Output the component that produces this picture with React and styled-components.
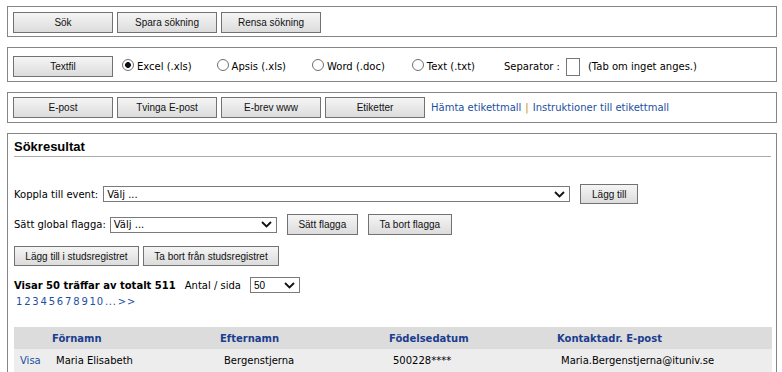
import React from "react";
import styled, { createGlobalStyle } from "styled-components";

const Global = createGlobalStyle`
  html, body { margin: 0; padding: 0; background: #fff; }
  body { font-family: "DejaVu Sans", Verdana, sans-serif; font-size: 10px; color: #000; }
`;

const Page = styled.div`
  width: 770px;
  padding: 6px 0 0 7px;
  display: flex;
  flex-direction: column;
  gap: 10px;
`;

const Panel = styled.div`
  border: 1px solid #858585;
  padding: ${(p) => p.$pad || "5px 5px 3px 5px"};
  display: flex;
  align-items: center;
  gap: ${(p) => p.$gap || "4px"};
`;

const ResultPanel = styled.div`
  border: 1px solid #858585;
  padding: 0 4px 0 5px;
  height: 260px;
  display: flex;
  flex-direction: column;
`;

const Button = styled.button`
  box-sizing: border-box;
  width: ${(p) => p.$w || 100}px;
  height: ${(p) => p.$h || 21}px;
  margin: 0 0 0 ${(p) => p.$ml || 0}px;
  padding: 0;
  border: 1px solid #727272;
  border-radius: 0;
  background: linear-gradient(#f5f5f5, #dcdcdc);
  font-family: "Liberation Sans", Arial, sans-serif;
  font-size: 10px;
  color: #111;
  flex: none;
`;

const RadioLabel = styled.label`
  display: flex;
  align-items: center;
  gap: 3px;
  margin-left: ${(p) => p.$ml || 0}px;
  white-space: nowrap;
`;

const Radio = styled.input.attrs({ type: "radio" })`
  appearance: none;
  margin: 0 0 4px 0;
  width: 12px;
  height: 12px;
  box-sizing: border-box;
  border: 1px solid #6f6f6f;
  border-radius: 50%;
  background: #fff;
  &:checked {
    background: radial-gradient(circle, #111 0 2.6px, #fff 3.2px);
  }
`;

const Text = styled.span`
  white-space: nowrap;
  margin-left: ${(p) => p.$ml || 0}px;
  font-weight: ${(p) => (p.$bold ? "bold" : "normal")};
`;

const SepInput = styled.span`
  display: inline-block;
  box-sizing: border-box;
  width: 14px;
  height: 18px;
  border: 1px solid #777;
  margin: 0 8px 0 6px;
`;

const LinkText = styled.a`
  color: #1c4f9f;
  text-decoration: none;
  white-space: nowrap;
`;

const Pipe = styled.span`
  color: #c58a1a;
  margin: 0 4px;
`;

const Heading = styled.h2`
  margin: 0 0 0 1px;
  padding: 5px 0 2px 0;
  font-family: "Liberation Sans", Arial, sans-serif;
  font-size: 13px;
  font-weight: bold;
  border-bottom: 1px solid #ababab;
  width: 757px;
`;

const Row = styled.div`
  display: flex;
  align-items: center;
  margin-top: ${(p) => p.$mt || 0}px;
  gap: ${(p) => p.$gap || 0}px;
  margin-left: 1px;
`;

const SelectBox = styled.div`
  box-sizing: border-box;
  width: ${(p) => p.$w}px;
  height: 16px;
  border: 1px solid #7a7a7a;
  display: flex;
  align-items: center;
  justify-content: space-between;
  padding: 0 4px 0 3px;
  margin-left: ${(p) => p.$ml || 0}px;
  font-family: ${(p) => (p.$arial ? '"Liberation Sans", Arial, sans-serif' : '"DejaVu Sans", Verdana, sans-serif')};
  font-size: 10px;
  flex: none;
`;

const Chevron = () => (
  <svg width="11" height="7" viewBox="0 0 11 7">
    <path d="M1 1 L5.5 5.5 L10 1" fill="none" stroke="#111" strokeWidth="1.8" />
  </svg>
);

const Pages = styled.div`
  display: flex;
  gap: 1px;
  margin: 3px 0 0 3px;
  letter-spacing: 0.8px;
`;

const Table = styled.table`
  border-collapse: collapse;
  width: 758px;
  margin-top: 20px;
  margin-left: 1px;
  table-layout: fixed;
`;

const Th = styled.th`
  background: #dcdcdc;
  color: #1a3d8f;
  font-weight: bold;
  text-align: left;
  height: 22px;
  padding: 0 0 0 ${(p) => p.$pl || 4}px;
  font-size: 10px;
`;

const Td = styled.td`
  background: #ededed;
  height: 23px;
  padding: 0 0 0 ${(p) => p.$pl || 8}px;
  font-size: 10px;
`;

export default function App() {
  return (
    <>
      <Global />
      <Page>
        <Panel $pad="5px 5px 3px 5px">
          <Button>Sök</Button>
          <Button>Spara sökning</Button>
          <Button>Rensa sökning</Button>
        </Panel>

        <Panel $pad="8px 5px 4px 5px" $gap="0">
          <Button>Textfil</Button>
          <RadioLabel $ml={9}><Radio name="fmt" defaultChecked />Excel (.xls)</RadioLabel>
          <RadioLabel $ml={25}><Radio name="fmt" />Apsis (.xls)</RadioLabel>
          <RadioLabel $ml={26}><Radio name="fmt" />Word (.doc)</RadioLabel>
          <RadioLabel $ml={27}><Radio name="fmt" />Text (.txt)</RadioLabel>
          <Text $ml={29}>Separator :</Text>
          <SepInput />
          <Text>(Tab om inget anges.)</Text>
        </Panel>

        <Panel $pad="4px 5px 4px 5px">
          <Button>E-post</Button>
          <Button>Tvinga E-post</Button>
          <Button>E-brev www</Button>
          <Button>Etiketter</Button>
          <Text $ml={2}>
            <LinkText href="#">Hämta etikettmall</LinkText>
            <Pipe>|</Pipe>
            <LinkText href="#">Instruktioner till etikettmall</LinkText>
          </Text>
        </Panel>

        <ResultPanel>
          <Heading>Sökresultat</Heading>
          <Row $mt={27}>
            <Text>Koppla till event:</Text>
            <SelectBox $w={467} $ml={5}><span>Välj ...</span><Chevron /></SelectBox>
            <Button $w={58} $h={20} $ml={10}>Lägg till</Button>
          </Row>
          <Row $mt={10}>
            <Text>Sätt global flagga:</Text>
            <SelectBox $w={167} $ml={4}><span>Välj ...</span><Chevron /></SelectBox>
            <Button $w={71} $ml={10}>Sätt flagga</Button>
            <Button $w={84} $ml={10}>Ta bort flagga</Button>
          </Row>
          <Row $mt={11} $gap={4}>
            <Button $w={125} $h={20}>Lägg till i studsregistret</Button>
            <Button $w={136} $h={20}>Ta bort från studsregistret</Button>
          </Row>
          <Row $mt={11}>
            <Text $bold>Visar 50 träffar av totalt 511</Text>
            <Text $ml={9}>Antal / sida</Text>
            <SelectBox $w={50} $ml={9} $arial><span>50</span><Chevron /></SelectBox>
          </Row>
          <Pages>
            {["1", "2", "3", "4", "5", "6", "7", "8", "9", "10", "...", ">>"].map((p) => (
              <LinkText key={p} href="#">{p}</LinkText>
            ))}
          </Pages>
          <Table>
            <colgroup>
              <col style={{ width: 34 }} />
              <col style={{ width: 168 }} />
              <col style={{ width: 169 }} />
              <col style={{ width: 168 }} />
              <col />
            </colgroup>
            <thead>
              <tr>
                <Th $pl={6}></Th>
                <Th>Förnamn</Th>
                <Th>Efternamn</Th>
                <Th>Födelsedatum</Th>
                <Th>Kontaktadr. E-post</Th>
              </tr>
            </thead>
            <tbody>
              <tr>
                <Td $pl={6}><LinkText href="#">Visa</LinkText></Td>
                <Td>Maria Elisabeth</Td>
                <Td>Bergenstjerna</Td>
                <Td>500228****</Td>
                <Td>Maria.Bergenstjerna@ituniv.se</Td>
              </tr>
            </tbody>
          </Table>
        </ResultPanel>
      </Page>
    </>
  );
}
